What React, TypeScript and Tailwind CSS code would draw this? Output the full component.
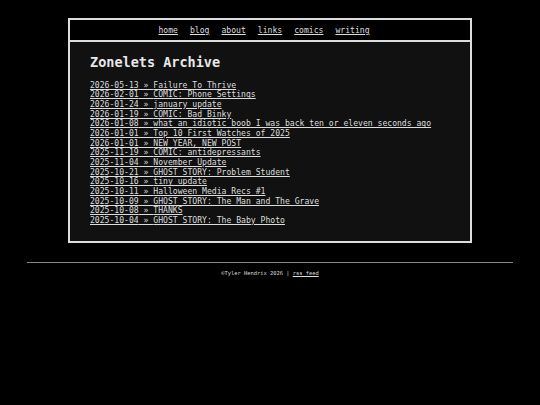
import React from "react";

const posts: [string, string][] = [
  ["2026-05-13", "Failure To Thrive"],
  ["2026-02-01", "COMIC: Phone Settings"],
  ["2026-01-24", "january update"],
  ["2026-01-19", "COMIC: Bad Binky"],
  ["2026-01-08", "what an idiotic boob I was back ten or eleven seconds ago"],
  ["2026-01-01", "Top 10 First Watches of 2025"],
  ["2026-01-01", "NEW YEAR, NEW POST"],
  ["2025-11-19", "COMIC: antidepressants"],
  ["2025-11-04", "November Update"],
  ["2025-10-21", "GHOST STORY: Problem Student"],
  ["2025-10-16", "tiny update"],
  ["2025-10-11", "Halloween Media Recs #1"],
  ["2025-10-09", "GHOST STORY: The Man and The Grave"],
  ["2025-10-08", "THANKS"],
  ["2025-10-04", "GHOST STORY: The Baby Photo"],
];

const nav = ["home", "blog", "about", "links", "comics", "writing"];

export default function App() {
  return (
    <div
      className="min-h-[405px] w-full bg-black text-[#dddddd] pt-[18px]"
      style={{ fontFamily: '"DejaVu Sans Mono", "Liberation Mono", monospace' }}
    >
      <div className="mx-auto w-[404px] border-2 border-[#dddddd]">
        <div className="h-[20px] bg-black flex items-center justify-center text-[8.1px] leading-[20px]">
          {nav.map((n) => (
            <a key={n} href="#" className="underline mr-[12px] text-[#dddddd]">
              {n}
            </a>
          ))}
        </div>
        <div className="border-t-2 border-[#dddddd] bg-[#111111] px-[20px] pt-[13px] pb-[15px]">
          <h1 className="text-[13.5px] font-bold leading-[15.7px] text-[#e8e8e8] mb-[10px]">
            Zonelets Archive
          </h1>
          <ul className="text-[8.1px] leading-[9.65px]">
            {posts.map(([d, t], i) => (
              <li key={i}>
                <a href="#" className="underline text-[#dddddd] whitespace-nowrap">
                  {d} » {t}
                </a>
              </li>
            ))}
          </ul>
        </div>
      </div>
      <hr className="mx-auto mt-[19px] w-[486px] border-0 border-t border-[#888888]" />
      <div className="text-center text-[5.4px] leading-[8px] mt-[6px] text-[#dddddd]">
        ©Tyler Hendrix 2026 |{" "}
        <a href="#" className="underline">
          rss feed
        </a>
      </div>
    </div>
  );
}
